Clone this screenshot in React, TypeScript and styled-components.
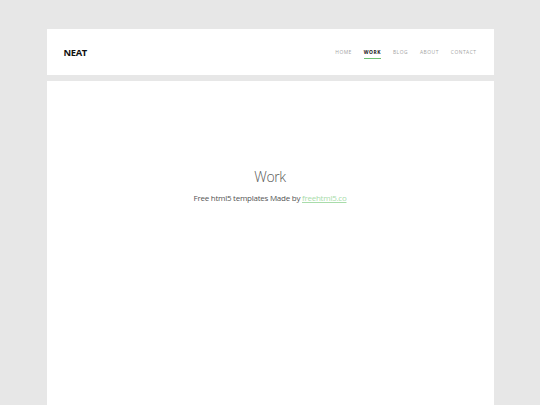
import React from 'react';
import styled, { createGlobalStyle } from 'styled-components';

const GlobalStyle = createGlobalStyle`
  html, body {
    margin: 0;
    padding: 0;
    background: #e7e7e7;
    font-family: "Open Sans", "Noto Sans", sans-serif;
  }
`;

const Page = styled.div`
  width: 447px;
  margin: 0 auto;
  padding-top: 29px;
  display: flex;
  flex-direction: column;
  gap: 6px;
`;

const Header = styled.header`
  height: 46px;
  background: #fff;
  display: flex;
  align-items: center;
  justify-content: space-between;
  padding: 0 17px;
  box-sizing: border-box;
`;

const Logo = styled.div`
  font-size: 9.4px;
  font-weight: 700;
  color: #111;
  letter-spacing: -0.35px;
  margin-top: 1px;
`;

const Nav = styled.nav`
  display: flex;
  gap: 12px;
  margin-top: 1px;
`;

const NavItem = styled.a<{ $active?: boolean }>`
  position: relative;
  font-size: 4.9px;
  letter-spacing: 0.5px;
  text-transform: uppercase;
  font-weight: ${(p) => (p.$active ? 700 : 400)};
  color: ${(p) => (p.$active ? '#111' : '#a3a3a3')};
  text-decoration: none;
  padding-bottom: 1px;

  &::after {
    content: '';
    display: ${(p) => (p.$active ? 'block' : 'none')};
    position: absolute;
    left: 0;
    right: 0;
    bottom: -3px;
    height: 1px;
    background: #6cc072;
  }
`;

const Main = styled.main`
  background: #fff;
  min-height: 340px;
  display: flex;
  flex-direction: column;
  align-items: center;
  padding-top: 86px;
  box-sizing: border-box;
`;

const Title = styled.h1`
  margin: 0;
  font-size: 14px;
  font-weight: 300;
  letter-spacing: -0.4px;
  color: #555;
`;

const Subtitle = styled.p`
  margin: 6px 0 0;
  font-size: 8px;
  font-weight: 400;
  letter-spacing: -0.25px;
  color: #555;

  a {
    color: #a8dcaa;
    text-decoration: underline;
    text-decoration-thickness: 0.5px;
  }
`;

const items = ['Home', 'Work', 'Blog', 'About', 'Contact'];

export default function App(): React.ReactElement {
  return (
    <>
      <GlobalStyle />
      <Page>
        <Header>
          <Logo>NEAT</Logo>
          <Nav>
            {items.map((item) => (
              <NavItem key={item} href="#" $active={item === 'Work'}>
                {item}
              </NavItem>
            ))}
          </Nav>
        </Header>
        <Main>
          <Title>Work</Title>
          <Subtitle>
            Free html5 templates Made by <a href="#">freehtml5.co</a>
          </Subtitle>
        </Main>
      </Page>
    </>
  );
}
